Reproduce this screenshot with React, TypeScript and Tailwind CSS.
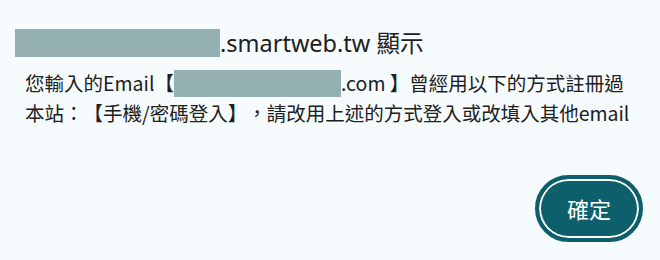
import React from 'react';

const App: React.FC = () => {
  return (
    <div className="w-[660px] h-[260px] bg-[#f6fbfe] text-[#202020] overflow-hidden" style={{ fontFamily: '"Noto Sans", "Noto Sans CJK TC", sans-serif' }}>
      <div className="pt-[29px] pl-[15px] flex items-center">
        <span className="inline-block w-[205px] h-[28px] bg-[#94b0b3]" />
        <span className="text-[23.5px] leading-[28px]">.smartweb.tw 顯示</span>
      </div>

      <div className="mt-[11px] pl-[25px] pr-[10px] text-[19.5px] leading-[30px] whitespace-nowrap [text-spacing-trim:space-all]" style={{ fontFamily: '"Noto Sans CJK TC", sans-serif' }}>
        <div className="flex items-center">
          <span>您輸入的Email【</span>
          <span className="inline-block w-[167px] h-[27px] bg-[#94b0b3]" />
          <span>.com 】曾經用以下的方式註冊過</span>
        </div>
        <div>本站：【手機/密碼登入】，請改用上述的方式登入或改填入其他email</div>
      </div>

      <div className="flex justify-end pr-[17px] mt-[47px]">
        <button className="w-[108px] h-[67px] rounded-full bg-[#0c5f6b] border-[4px] border-[#0c5f6b] shadow-[inset_0_0_0_2px_#ffffff] text-white text-[22px] flex items-center justify-center" style={{ fontFamily: '"Noto Sans CJK TC", sans-serif' }}>
          確定
        </button>
      </div>
    </div>
  );
};

export default App;
